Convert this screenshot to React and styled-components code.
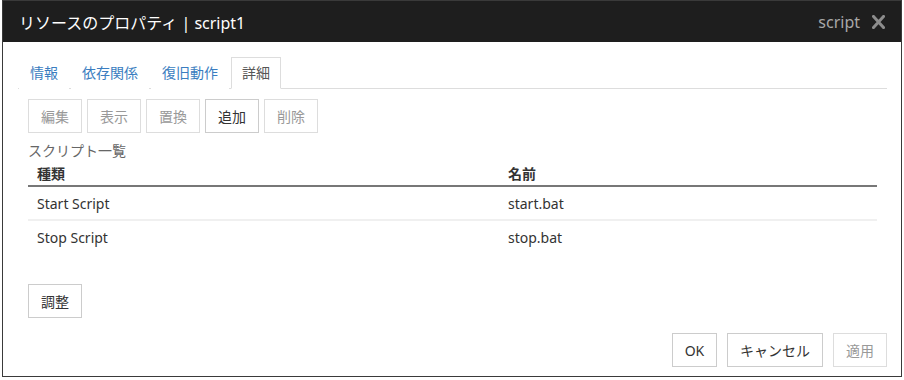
import styled, { createGlobalStyle } from 'styled-components';

const GlobalStyle = createGlobalStyle`
    body {
        margin: 0;
        background: #fff;
        font-family: "Noto Sans", "Noto Sans CJK JP", sans-serif;
    }
`;

const tabs = ['情報', '依存関係', '復旧動作', '詳細'];

const tools = [
    { label: '編集', enabled: false },
    { label: '表示', enabled: false },
    { label: '置換', enabled: false },
    { label: '追加', enabled: true },
    { label: '削除', enabled: false },
];

const scripts = [
    { kind: 'Start Script', name: 'start.bat' },
    { kind: 'Stop Script', name: 'stop.bat' },
];

const CloseIcon = () => (
    <svg width="13" height="14" viewBox="0 0 13 14">
        <path d="M1.5 1.5 L11.5 12.5 M11.5 1.5 L1.5 12.5" stroke="#8c8c8c" strokeWidth="3" strokeLinecap="square" fill="none" />
    </svg>
);

const App = () => {
    return (
        <>
            <GlobalStyle />
            <Dialog>
                <TitleBar>
                    <Title>リソースのプロパティ | script1</Title>
                    <TypeName>script</TypeName>
                    <CloseIcon />
                </TitleBar>

                <TabList>
                    {tabs.map((t, i) => (
                        <Tab key={t} $active={i === tabs.length - 1}>{t}</Tab>
                    ))}
                </TabList>

                <Content>
                    <Toolbar>
                        {tools.map((b) => (
                            <Button key={b.label} $enabled={b.enabled}>{b.label}</Button>
                        ))}
                    </Toolbar>

                    <ListLabel>スクリプト一覧</ListLabel>
                    <Table>
                        <HeadRow>
                            <KindCell>種類</KindCell>
                            <NameCell>名前</NameCell>
                        </HeadRow>
                        {scripts.map((s, i) => (
                            <Row key={s.name} $first={i === 0}>
                                <KindCell>{s.kind}</KindCell>
                                <NameCell>{s.name}</NameCell>
                            </Row>
                        ))}
                    </Table>

                    <AdjustRow>
                        <Button $enabled>調整</Button>
                    </AdjustRow>
                </Content>

                <Footer>
                    <Button $enabled $width="45px">OK</Button>
                    <Button $enabled $width="96px">キャンセル</Button>
                    <Button>適用</Button>
                </Footer>
            </Dialog>
        </>
    );
};

const Dialog = styled.div`
    box-sizing: border-box;
    margin-left: 2px;
    width: 900px;
    height: 377px;
    border: 1px solid #3a3a3a;
    display: flex;
    flex-direction: column;
    background: #fff;
`;

const TitleBar = styled.div`
    height: 41px;
    flex-shrink: 0;
    background: #1e1e1e;
    display: flex;
    align-items: center;
    padding: 0 16px 0 16px;
`;

const Title = styled.div`
    flex: 1;
    color: #fff;
    font-size: 16px;
`;

const TypeName = styled.div`
    color: #a8a8a8;
    font-size: 16px;
    margin-right: 12px;
`;

const TabList = styled.div`
    display: flex;
    margin: 15px 14px 0 15px;
    padding-left: 1px;
    border-bottom: 1px solid #ddd;
`;

const Tab = styled.div`
    height: 30px;
    line-height: 30px;
    padding: 0 10px;
    margin-right: 2px;
    margin-bottom: -1px;
    font-size: 14px;
    color: ${(p) => (p.$active ? '#555' : '#3a7dc0')};
    background: #fff;
    border: 1px solid ${(p) => (p.$active ? '#ddd' : 'transparent')};
    border-bottom-color: ${(p) => (p.$active ? '#fff' : 'transparent')};
`;

const Content = styled.div`
    padding: 0 24px 0 25px;
`;

const Toolbar = styled.div`
    display: flex;
    gap: 5px;
    margin-top: 10px;
`;

const Button = styled.div`
    box-sizing: border-box;
    width: ${(p) => p.$width || '54px'};
    height: 34px;
    display: flex;
    align-items: center;
    justify-content: center;
    background: #fff;
    font-size: 14px;
    color: ${(p) => (p.$enabled ? '#333' : '#999')};
    border: 1px solid ${(p) => (p.$enabled ? '#ccc' : '#ddd')};
`;

const ListLabel = styled.div`
    margin-top: 8px;
    line-height: 20px;
    font-size: 14px;
    color: #666;
`;

const Table = styled.div`
    display: flex;
    flex-direction: column;
`;

const HeadRow = styled.div`
    display: flex;
    height: 24px;
    align-items: center;
    border-bottom: 2px solid #777;
    font-weight: bold;
    color: #333;
`;

const Row = styled.div`
    display: flex;
    height: 32px;
    align-items: center;
    color: #333;
    border-top: ${(p) => (p.$first ? 'none' : '2px solid #f0f0f0')};
`;

const KindCell = styled.div`
    width: 462px;
    padding-left: 9px;
    font-size: 14px;
`;

const NameCell = styled.div`
    flex: 1;
    padding-left: 9px;
    font-size: 14px;
`;

const AdjustRow = styled.div`
    display: flex;
    margin-top: 31px;
`;

const Footer = styled.div`
    margin-top: auto;
    display: flex;
    justify-content: flex-end;
    gap: 10px;
    padding: 0 14px 9px 0;
`;

export default App
